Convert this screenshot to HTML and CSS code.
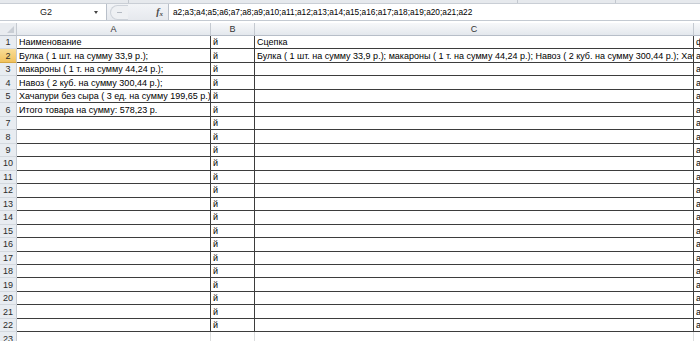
FILE: index.html
```html
<!DOCTYPE html>
<html lang="ru">
<head>
    <meta charset="UTF-8">
    <title>Книга1 - Excel</title>
    <link rel="stylesheet" href="styles.css">
</head>
<body>
    <div class="window">
        <!-- ribbon edge -->
        <div class="ribbon-edge">
            <span class="sep sep-1"></span>
            <span class="sep sep-2"></span>
            <span class="sep sep-3"></span>
        </div>

        <!-- formula bar -->
        <div class="formula-bar">
            <div class="name-box">
                <span class="name-value">G2</span>
                <span class="name-arrow"></span>
            </div>
            <div class="fx-zone">
                <span class="grip"><span class="grip-dash"></span></span>
                <span class="fx">f<sub>x</sub></span>
            </div>
            <div class="formula-input">a2;a3;a4;a5;a6;a7;a8;a9;a10;a11;a12;a13;a14;a15;a16;a17;a18;a19;a20;a21;a22</div>
        </div>

        <!-- sheet -->
        <table class="sheet">
            <colgroup>
                <col class="col-hd">
                <col class="col-a">
                <col class="col-b">
                <col class="col-c">
                <col class="col-d">
            </colgroup>
            <thead>
                <tr>
                    <th class="corner"><span class="corner-tri"></span></th>
                    <th>A</th>
                    <th>B</th>
                    <th>C</th>
                    <th>D</th>
                </tr>
            </thead>
            <tbody>
                <tr><th>1</th><td>Наименование</td><td>й</td><td>Сцепка</td><td>ф</td></tr>
                <tr><th class="row-active">2</th><td>Булка ( 1 шт. на сумму 33,9 р.);</td><td>й</td><td>Булка ( 1 шт. на сумму 33,9 р.); макароны ( 1 т. на сумму 44,24 р.); Навоз ( 2 куб. на сумму 300,44 р.); Хачапури без сыра ( 3 ед. на сумму 199,65 р.)</td><td>а</td></tr>
                <tr><th>3</th><td>макароны ( 1 т. на сумму 44,24 р.);</td><td>й</td><td></td><td>а</td></tr>
                <tr><th>4</th><td>Навоз ( 2 куб. на сумму 300,44 р.);</td><td>й</td><td></td><td>а</td></tr>
                <tr><th>5</th><td>Хачапури без сыра ( 3 ед. на сумму 199,65 р.)</td><td>й</td><td></td><td>а</td></tr>
                <tr><th>6</th><td>Итого товара на сумму: 578,23 р.</td><td>й</td><td></td><td>а</td></tr>
                <tr><th>7</th><td></td><td>й</td><td></td><td>а</td></tr>
                <tr><th>8</th><td></td><td>й</td><td></td><td>а</td></tr>
                <tr><th>9</th><td></td><td>й</td><td></td><td>а</td></tr>
                <tr><th>10</th><td></td><td>й</td><td></td><td>а</td></tr>
                <tr><th>11</th><td></td><td>й</td><td></td><td>а</td></tr>
                <tr><th>12</th><td></td><td>й</td><td></td><td>а</td></tr>
                <tr><th>13</th><td></td><td>й</td><td></td><td>а</td></tr>
                <tr><th>14</th><td></td><td>й</td><td></td><td>а</td></tr>
                <tr><th>15</th><td></td><td>й</td><td></td><td>а</td></tr>
                <tr><th>16</th><td></td><td>й</td><td></td><td>а</td></tr>
                <tr><th>17</th><td></td><td>й</td><td></td><td>а</td></tr>
                <tr><th>18</th><td></td><td>й</td><td></td><td>а</td></tr>
                <tr><th>19</th><td></td><td>й</td><td></td><td>а</td></tr>
                <tr><th>20</th><td></td><td>й</td><td></td><td>а</td></tr>
                <tr><th>21</th><td></td><td>й</td><td></td><td>а</td></tr>
                <tr><th>22</th><td></td><td>й</td><td></td><td>а</td></tr>
                <tr class="plain"><th>23</th><td></td><td></td><td></td><td></td></tr>
            </tbody>
        </table>
    </div>
</body>
</html>
```

FILE: styles.css
```css
/* Excel 2010 sheet */
:root {
    --xl-line: #3d3d3d;
    --xl-grid: #dadcdd;
    --xl-hd-line: #c5cad1;
    --xl-text: #000;
}

* { margin: 0; padding: 0; box-sizing: border-box; }
body { background: #fff; overflow: hidden; font-family: "Liberation Sans", Arial, sans-serif; }

.window { width: 700px; height: 341px; overflow: hidden; }

/* Ribbon edge */
.ribbon-edge {
    height: 4px; background: #e6e9ed; border-bottom: 1px solid #c9ced5;
    position: relative;
}
.sep { position: absolute; top: 0; width: 1px; height: 3px; background: #c3c8cf; }
.sep-1 { left: 128px; }
.sep-2 { left: 517px; }
.sep-3 { left: 615px; }

/* Formula bar */
.formula-bar {
    display: flex; height: 17px; background: linear-gradient(#f2f4f7, #e6e9ee);
    border-bottom: 1px solid #c4cad2;
}
.name-box {
    width: 107px; background: #fff; border-right: 1px solid #b9c0ca;
    display: flex; align-items: center; position: relative;
}
.name-value { width: 92px; text-align: center; font-size: 9px; color: #222; }
.name-arrow {
    width: 0; height: 0; margin-left: 2px;
    border-left: 2.5px solid transparent; border-right: 2.5px solid transparent;
    border-top: 3px solid #444;
}
.fx-zone { width: 61px; display: flex; align-items: center; }
.grip {
    width: 18px; height: 15px; margin-left: 3px; border-radius: 8px 0 0 8px;
    border: 1px solid #cdd2d9; border-right: none; background: #eef0f3;
    display: flex; align-items: center; justify-content: center;
}
.grip-dash { width: 5px; height: 1px; background: #b4bac3; }
.fx {
    margin-left: auto; margin-right: 5px; font-family: "Liberation Serif", serif;
    font-style: italic; font-weight: bold; font-size: 10px; color: #4a4a4a;
}
.fx sub { font-size: 7px; vertical-align: -1px; }
.formula-input {
    flex: 1; background: #fff; border-left: 1px solid #b9c0ca;
    padding-left: 4px; font-size: 8.3px; line-height: 16px; color: var(--xl-text);
    white-space: nowrap; overflow: hidden;
}

/* Sheet */
.sheet {
    margin-top: 2px; width: 740px; table-layout: fixed;
    border-collapse: separate; border-spacing: 0;
    font-size: 9px; color: var(--xl-text);
}
.col-hd { width: 17px; }
.col-a { width: 194px; }
.col-b { width: 44px; }
.col-c { width: 439px; }
.col-d { width: 46px; }

.sheet thead th {
    height: 13px; font-weight: normal; color: #333;
    background: linear-gradient(#f7f8fa, #e4e8ed);
    border-right: 1px solid var(--xl-hd-line); border-bottom: 1px solid #b7bec8;
    text-align: center; line-height: 12px;
}
.sheet thead th.corner { background: #e9ecf0; position: relative; }
.corner-tri {
    position: absolute; right: 2px; bottom: 2px; width: 0; height: 0;
    border-left: 7px solid transparent; border-bottom: 7px solid #c9ced5;
}

.sheet tbody tr { height: 13.48px; }
.sheet tbody th {
    font-weight: normal; color: #2a2a2a; text-align: center;
    background: #e8ecf1; border-right: 1px solid var(--xl-hd-line);
    border-bottom: 1px solid #d3d8de; line-height: 12px;
}
.sheet tbody th.row-active {
    background: linear-gradient(#f9dd96, #f1c25e); border-bottom-color: #d6a844;
}
.sheet td {
    padding: 0 2px; white-space: nowrap; overflow: hidden;
    border-right: 1px solid var(--xl-line); border-bottom: 1px solid var(--xl-line);
    line-height: 12px; vertical-align: middle;
}
.sheet tr.plain td { border-right-color: var(--xl-grid); border-bottom-color: var(--xl-grid); }
```
